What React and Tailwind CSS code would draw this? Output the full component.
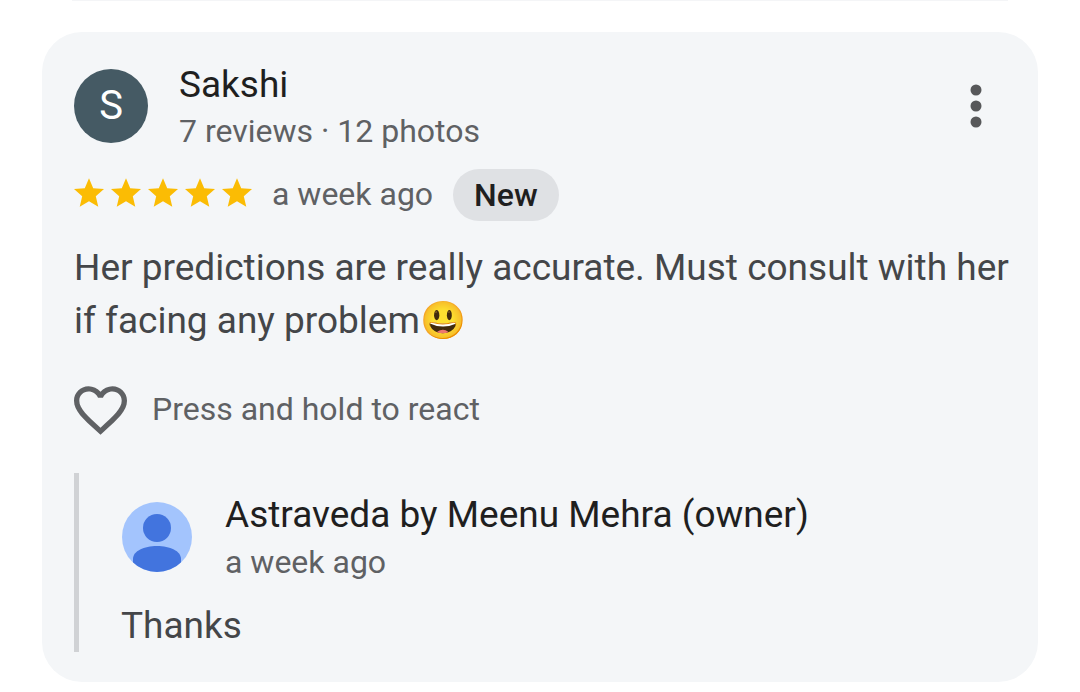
import React from "react";

const review = {
  author: "Sakshi",
  initial: "S",
  stats: "7 reviews · 12 photos",
  rating: 5,
  date: "a week ago",
  text: "Her predictions are really accurate. Must consult with her if facing any problem",
  reply: {
    author: "Astraveda by Meenu Mehra (owner)",
    date: "a week ago",
    text: "Thanks",
  },
};

const Star = () => (
  <svg viewBox="2 2 20 19" className="h-[29px] w-[30px] fill-[#fbbc04]" aria-hidden="true">
    <path d="M12 17.27 18.18 21l-1.64-7.03L22 9.24l-7.19-.61L12 2 9.19 8.63 2 9.24l5.46 4.73L5.82 21z" />
  </svg>
);

const Heart = () => (
  <svg viewBox="2 3 20 18.35" className="h-[49px] w-[53px] fill-[#5f6164]" aria-hidden="true">
    <path d="M16.5 3c-1.74 0-3.41.81-4.5 2.09C10.91 3.81 9.24 3 7.5 3 4.42 3 2 5.42 2 8.5c0 3.78 3.4 6.86 8.55 11.54L12 21.35l1.45-1.32C18.6 15.36 22 12.28 22 8.5 22 5.42 19.58 3 16.5 3zm-4.4 15.55-.1.1-.1-.1C7.14 14.24 4 11.39 4 8.5 4 6.5 5.5 5 7.5 5c1.54 0 3.04.99 3.57 2.36h1.87C13.46 5.99 14.96 5 16.5 5c2 0 3.5 1.5 3.5 3.5 0 2.89-3.14 5.74-7.9 10.05z" />
  </svg>
);

const OwnerAvatar = () => (
  <svg viewBox="0 0 72 72" className="size-18 shrink-0" aria-hidden="true">
    <clipPath id="owner-clip">
      <circle cx="36" cy="36" r="35" />
    </clipPath>
    <circle cx="36" cy="36" r="35" fill="#a3c4fd" />
    <circle cx="36" cy="27" r="14" fill="#4274de" />
    <path
      d="M12 62v-4c0-8 11-13 24-13s24 5 24 13v4l-7 10H19z"
      fill="#4274de"
      clipPath="url(#owner-clip)"
    />
  </svg>
);

const App = () => {
  return (
    <main className="font-[Roboto,sans-serif] text-[#1f1f1f]">
      {/* Bottom edge of the previous card */}
      <div className="mx-18 h-px bg-[#f4f5f7]" />

      <article className="mx-[42px] mt-[31px] rounded-[40px] bg-[#f4f6f8] pt-[29px] pr-6 pb-[30px] pl-8">
        <header className="flex items-start">
          <div className="mt-2 flex size-[74px] shrink-0 items-center justify-center rounded-full bg-[#455a64] text-[40px] text-white">
            {review.initial}
          </div>
          <div className="ml-[31px] flex-1">
            <h2 className="text-[37px] leading-[48px]">{review.author}</h2>
            <p className="text-[32px] leading-[45px] text-[#5f6164]">{review.stats}</p>
          </div>
          <button type="button" aria-label="More options" className="self-center px-8 pb-1">
            <svg viewBox="0 0 12 44" className="h-11 w-3 fill-[#57585a]" aria-hidden="true">
              <circle cx="6" cy="6" r="5.5" />
              <circle cx="6" cy="22" r="5.5" />
              <circle cx="6" cy="38" r="5.5" />
            </svg>
          </button>
        </header>

        {/* Rating */}
        <div className="mt-[15px] flex items-center text-[32px] leading-[44px]">
          <div className="mb-1.5 flex gap-[7px]" role="img" aria-label="5 out of 5 stars">
            {Array.from({ length: review.rating }, (_, index) => (
              <Star key={index} />
            ))}
          </div>
          <span className="ml-5 pb-0.5 text-[#5f6164]">{review.date}</span>
          <span className="ml-5 rounded-full bg-[#dfe1e4] px-[21px] py-1 font-medium">New</span>
        </div>

        <p className="mt-5 text-[37px] leading-[53px] text-[#444649]">
          {review.text}
          <span className="inline-block">😃</span>
        </p>

        <button type="button" className="mt-[39px] flex items-center gap-[25px] text-[#5f6164]">
          <Heart />
          <span className="pb-1 text-[32px] leading-[44px]">Press and hold to react</span>
        </button>

        {/* Owner reply */}
        <section className="mt-[38px] border-l-[5px] border-[#d0d2d5] pt-[18px] pl-[42px]">
          <div className="flex items-start">
            <div className="mt-[10px]">
              <OwnerAvatar />
            </div>
            <div className="ml-8">
              <h3 className="text-[37px] leading-[48px]">{review.reply.author}</h3>
              <p className="text-[32px] leading-[46px] text-[#5f6164]">{review.reply.date}</p>
            </div>
          </div>
          <p className="mt-[14px] text-[37px] leading-[53px] text-[#444649]">{review.reply.text}</p>
        </section>
      </article>
    </main>
  );
};

export default App;
